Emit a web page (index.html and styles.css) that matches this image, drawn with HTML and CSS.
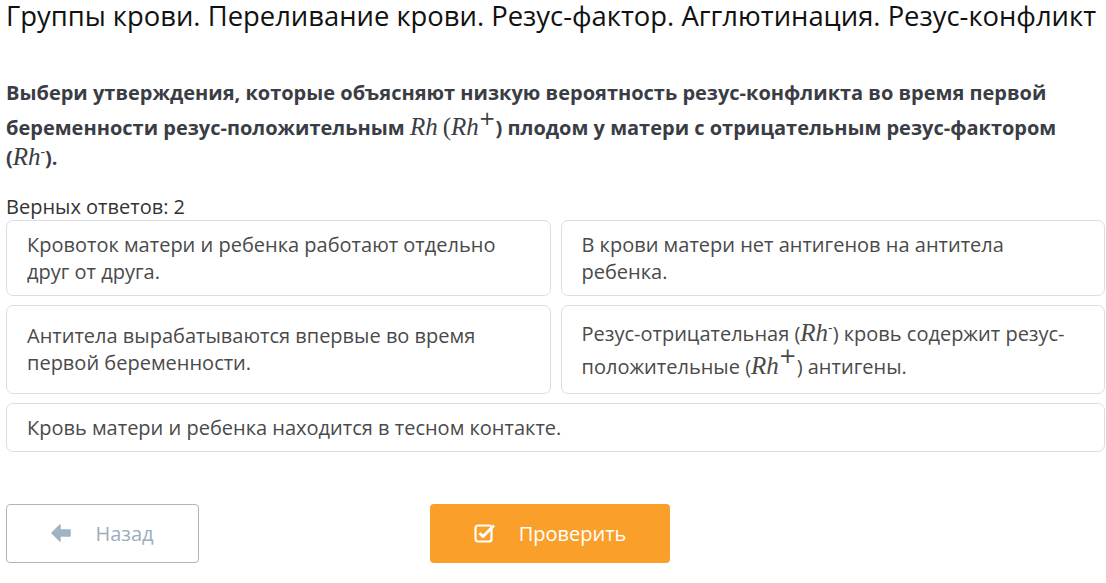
FILE: index.html
```html
<!DOCTYPE html>
<html lang="ru">
<head>
<meta charset="utf-8">
<link rel="stylesheet" href="styles.css">
</head>
<body>
<h1 class="title">Группы крови. Переливание крови. Резус-фактор. Агглютинация. Резус-конфликт</h1>
<p class="question">Выбери утверждения, которые объясняют низкую вероятность резус-конфликта во время первой беременности резус-положительным <span class="math"><i>Rh</i>&#8201;(<i>Rh</i><sup class="plus">+</sup></span>) плодом у матери с отрицательным резус-фактором (<span class="math"><i>Rh</i></span><sup class="minus">-</sup>).</p>
<div class="count">Верных ответов: 2</div>
<div class="answers">
  <div class="card"><span class="txt">Кровоток матери и ребенка работают отдельно друг от друга.</span></div>
  <div class="card"><span class="txt">В крови матери нет антигенов на антитела ребенка.</span></div>
  <div class="card"><span class="txt">Антитела вырабатываются впервые во время первой беременности.</span></div>
  <div class="card"><span class="txt">Резус-отрицательная (<span class="math"><i>Rh</i></span><sup class="minus">-</sup>) кровь содержит резус-положительные (<span class="math"><i>Rh</i><sup class="plus">+</sup></span>) антигены.</span></div>
  <div class="card wide"><span class="txt">Кровь матери и ребенка находится в тесном контакте.</span></div>
</div>
<div class="actions">
  <button class="btn back">
    <svg class="ico" viewBox="0 0 20 18" width="20" height="18"><path d="M9 1 L1 9 L9 17 L9 12 L19 12 L19 6 L9 6 Z" fill="#9fb3c3" stroke="#9fb3c3" stroke-width="1.5" stroke-linejoin="round"/></svg>
    <span>Назад</span>
  </button>
  <button class="btn check">
    <svg class="ico" viewBox="0 0 22 20" width="22" height="20"><rect x="1.5" y="2.5" width="16" height="16" rx="2.5" fill="none" stroke="#fff" stroke-width="2.2"/><path d="M5.5 10 L9 13.5 L20 2.5" fill="none" stroke="#fff" stroke-width="3" stroke-linejoin="round"/></svg>
    <span>Проверить</span>
  </button>
</div>
</body>
</html>
```
FILE: styles.css
```css
* { box-sizing: border-box; }
html, body { background: #fff; }
body {
  margin: 0;
  padding: 0 1px 0 6px;
  font-family: "Open Sans", "Noto Sans", sans-serif;
  color: #333;
}
.title {
  margin: 0;
  font-size: 27.4px;
  line-height: 32px;
  font-weight: 400;
  color: #111;
  white-space: nowrap;
}
.question {
  margin: 46px 0 0;
  font-size: 20px;
  line-height: 30px;
  font-weight: 700;
  color: #3a3d45;
}
.math {
  font-family: "Liberation Serif", "DejaVu Serif", serif;
  font-weight: 400;
  font-size: 1.25em;
  line-height: 1;
}
.math i { font-style: italic; }
sup { line-height: 0; }
.plus { font-size: 0.8em; font-family: "DejaVu Sans", sans-serif; vertical-align: 0.5em; line-height: 1; }
.minus { font-size: 0.7em; vertical-align: 0.6em; font-weight: 400; }
.count {
  margin-top: 22px;
  font-size: 20px;
  line-height: 24px;
  color: #333;
}
.answers {
  margin-top: 1px;
  display: grid;
  grid-template-columns: 1fr 1fr;
  column-gap: 10px;
  row-gap: 9px;
}
.card {
  display: flex;
  align-items: center;
  border: 1px solid #dedede;
  border-radius: 7px;
  padding: 10px 20px;
  font-size: 20px;
  line-height: 27px;
  color: #4a4a4a;
  min-height: 48px;
}
.card .math { line-height: 1.33; }
.card .plus { vertical-align: 0.5em; font-size: 0.85em; line-height: 0.7; }
.wide { grid-column: 1 / 3; }
.actions {
  margin-top: 52px;
  display: flex;
  gap: 231px;
}
.btn {
  height: 59px;
  border-radius: 4px;
  font-family: "Open Sans", sans-serif;
  font-size: 20px;
  display: flex;
  align-items: center;
  justify-content: center;
  gap: 24px;
  cursor: pointer;
}
.back {
  width: 193px;
  background: #fff;
  border: 1px solid #a9b7c4;
  color: #9cadbb;
}
.check {
  width: 240px;
  background: #fb9f2b;
  border: none;
  color: #fff;
  gap: 23px;
}
```
